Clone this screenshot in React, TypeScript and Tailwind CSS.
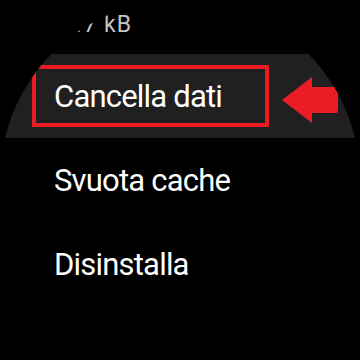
const rows = ["Svuota cache", "Disinstalla"];

export default function App() {
  return (
    <div className="w-[360px] h-[360px] bg-black">
      {/* round watch screen */}
      <div
        className="relative w-[360px] h-[360px] rounded-full overflow-hidden bg-black text-white"
        style={{ fontFamily: "Roboto, 'Noto Sans', sans-serif" }}
      >
        <div className="h-[54px] pt-[13px] pl-[50px] text-[23px] leading-none tracking-[1px] text-[#c4c4c4] whitespace-nowrap">
          1,47 kB
        </div>

        {/* selected row */}
        <div className="h-[84px] bg-[#202020] flex items-center pl-[32px]">
          <div className="w-[237px] h-[62px] border-4 border-[#ec1c24] flex items-center pl-[18px]">
            <span className="text-[31px] leading-none tracking-[-0.8px]">Cancella dati</span>
          </div>
        </div>

        {rows.map((label) => (
          <div key={label} className="h-[84px] flex items-center pl-[54px]">
            <span className="text-[31px] leading-none tracking-[-0.8px]">{label}</span>
          </div>
        ))}

        {/* annotation arrow */}
        <svg className="absolute left-0 top-0" width="360" height="360" viewBox="0 0 360 360">
          <path
            d="M282 100 L312 77 L312 87 L336 87 Q338 87 338 89 L338 111 Q338 113 336 113 L312 113 L312 123 Z"
            fill="#ec1c24"
          />
        </svg>
      </div>
    </div>
  );
}
